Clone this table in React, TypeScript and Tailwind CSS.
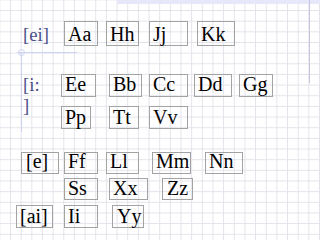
import React from "react";

type Box = { t: string; cls: string };

const boxes: Box[] = [
  { t: "Aa", cls: "left-[64px] top-[21px] w-[34px] h-[25px] pt-[4px] pl-[3px]" },
  { t: "Hh", cls: "left-[106px] top-[21px] w-[33px] h-[25px] pt-[4px] pl-[3px]" },
  { t: "Jj", cls: "left-[149px] top-[21px] w-[39px] h-[25px] pt-[4px] pl-[3px]" },
  { t: "Kk", cls: "left-[197px] top-[21px] w-[38px] h-[25px] pt-[4px] pl-[3px]" },

  { t: "Ee", cls: "left-[61px] top-[74px] w-[35px] h-[23px] pt-[1px] pl-[3px]" },
  { t: "Bb", cls: "left-[109px] top-[74px] w-[33px] h-[23px] pt-[1px] pl-[3px]" },
  { t: "Cc", cls: "left-[149px] top-[74px] w-[39px] h-[23px] pt-[1px] pl-[3px]" },
  { t: "Dd", cls: "left-[194px] top-[74px] w-[38px] h-[23px] pt-[1px] pl-[3px]" },
  { t: "Gg", cls: "left-[239px] top-[74px] w-[34px] h-[23px] pt-[1px] pl-[3px]" },

  { t: "Pp", cls: "left-[61px] top-[106px] w-[30px] h-[23px] pt-[1.5px] pl-[3px]" },
  { t: "Tt", cls: "left-[109px] top-[106px] w-[30px] h-[23px] pt-[1.5px] pl-[3px]" },
  { t: "Vv", cls: "left-[149px] top-[106px] w-[39px] h-[23px] pt-[1.5px] pl-[3px]" },

  { t: "[e]", cls: "left-[21px] top-[152px] w-[38px] h-[22px] pt-0 pl-[4px]" },
  { t: "Ff", cls: "left-[64px] top-[152px] w-[34px] h-[22px] pt-0 pl-[3px]" },
  { t: "Ll", cls: "left-[106px] top-[152px] w-[33px] h-[22px] pt-0 pl-[3px]" },
  { t: "Mm", cls: "left-[152px] top-[152px] w-[39px] h-[22px] pt-0 pl-[3px]" },
  { t: "Nn", cls: "left-[205px] top-[152px] w-[38px] h-[22px] pt-0 pl-[3px]" },

  { t: "Ss", cls: "left-[64px] top-[178px] w-[34px] h-[22px] pt-[0.5px] pl-[3px]" },
  { t: "Xx", cls: "left-[109px] top-[178px] w-[39px] h-[22px] pt-[0.5px] pl-[3px]" },
  { t: "Zz", cls: "left-[162px] top-[178px] w-[31px] h-[22px] pt-[0.5px] pl-[4px]" },

  { t: "[ai]", cls: "left-[16px] top-[205px] w-[37px] h-[23px] pt-[2px] pl-[3px]" },
  { t: "Ii", cls: "left-[64px] top-[205px] w-[34px] h-[23px] pt-[2px] pl-[3px]" },
  { t: "Yy", cls: "left-[112px] top-[205px] w-[32px] h-[23px] pt-[2px] pl-[4px]" },
];

export default function App() {
  return (
    <div
      className="relative w-[320px] h-[240px] overflow-hidden bg-white bg-[linear-gradient(to_right,#e3e3ec_1px,transparent_1px),linear-gradient(to_bottom,#e3e3ec_1px,transparent_1px)] bg-[length:10.667px_10.667px] bg-[position:10px_10px]"
      style={{ fontFamily: '"Liberation Serif", "Times New Roman", serif' }}
    >
      {/* top ruler band */}
      <div className="absolute left-[117px] top-0 w-[203px] h-[4px] bg-[#e6e8fa]" />
      {/* right guide line */}
      <div className="absolute left-[309px] top-0 w-px h-[83px] bg-[#c4c4e0]" />
      {/* left guide L */}
      <div className="absolute left-[17px] top-[52px] w-[60px] h-px bg-[#cdd4f2]" />
      <div className="absolute left-[21px] top-[52px] w-px h-[80px] bg-[#cdd4f2]" />
      <div className="absolute left-[18px] top-[49px] w-[7px] h-[7px] rounded-full border border-[#cdd4f2]" />

      {/* unboxed labels */}
      <div className="absolute left-[23px] top-[24px] text-[18.67px] leading-[21px] text-[#4b5088] whitespace-nowrap">
        [ei]
      </div>
      <div className="absolute left-[23px] top-[74px] w-[20px] text-[18.67px] leading-[21px] text-[#4b5088]">
        [i: ]
      </div>

      {boxes.map((b) => (
        <div
          key={b.t}
          className={`absolute border border-[#a3a3a3] text-[20px] leading-[16px] text-black whitespace-nowrap ${b.cls}`}
        >
          {b.t}
        </div>
      ))}
    </div>
  );
}
